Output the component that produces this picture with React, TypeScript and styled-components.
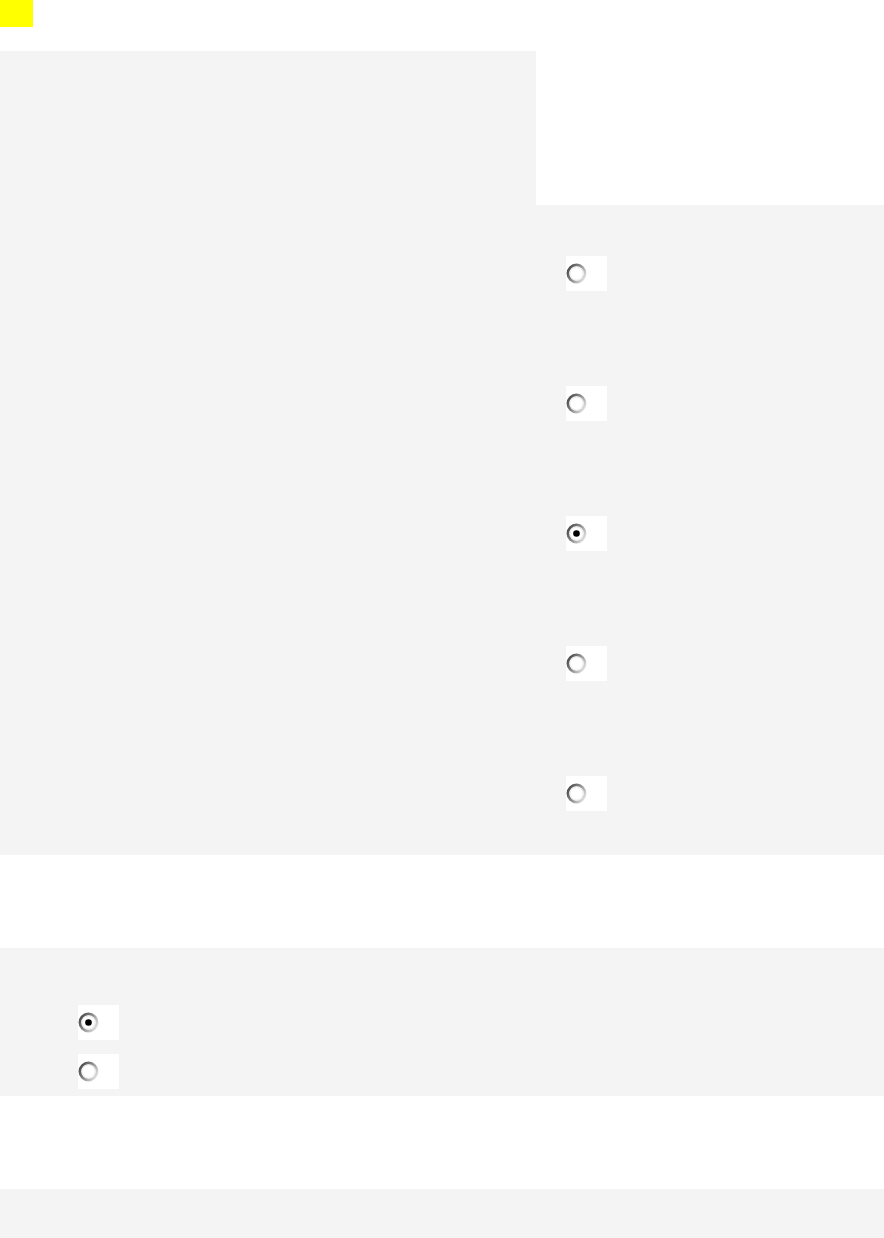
import React from "react";
import styled, { createGlobalStyle } from "styled-components";

const GlobalStyle = createGlobalStyle`
  html, body {
    margin: 0;
    padding: 0;
    background: #ffffff;
    font-family: "Liberation Sans", Arial, sans-serif;
  }
`;

const Page = styled.div`
  display: flex;
  flex-direction: column;
  width: 884px;
`;

const Marker = styled.div`
  width: 33px;
  height: 27px;
  background: #ffff00;
  margin-bottom: 24px;
`;

const Band = styled.section<{ $shade?: boolean; $height: number }>`
  background: ${(p) => (p.$shade ? "#f4f4f4" : "#ffffff")};
  height: ${(p) => p.$height}px;
  flex-shrink: 0;
`;

const Split = styled(Band)`
  display: grid;
  grid-template-columns: 536px 1fr;
`;

const SideColumn = styled.div`
  display: flex;
  flex-direction: column;
`;

const SideHeader = styled.div`
  height: 154px;
  background: #ffffff;
`;

const OptionList = styled.div<{ $gap: number; $top: number; $left: number }>`
  display: flex;
  flex-direction: column;
  gap: ${(p) => p.$gap}px;
  padding-top: ${(p) => p.$top}px;
  padding-left: ${(p) => p.$left}px;
`;

const RadioBox = styled.div`
  width: 41px;
  height: 35px;
  background: #ffffff;
  display: flex;
  align-items: center;
  padding-top: 1px;
  box-sizing: border-box;
`;

const Radio = ({ checked }: { checked?: boolean }) => (
  <RadioBox>
    <svg width="22" height="22" viewBox="0 0 22 22">
      <defs>
        <linearGradient id="ring" x1="0" y1="0.2" x2="1" y2="0.8">
          <stop offset="0" stopColor="#4a4a4a" />
          <stop offset="0.45" stopColor="#8a8a8a" />
          <stop offset="1" stopColor="#e4e4e4" />
        </linearGradient>
      </defs>
      <circle cx="10.5" cy="10.5" r="8.6" fill="#ffffff" stroke="url(#ring)" strokeWidth="2.7" />
      <circle cx="10.5" cy="10.5" r="6.5" fill="none" stroke="#ececec" strokeWidth="1" />
      {checked && <circle cx="10.5" cy="10.5" r="3.3" fill="#000000" />}
    </svg>
  </RadioBox>
);

const App = (): JSX.Element => {
  const sideOptions = [false, false, true, false, false];
  return (
    <>
      <GlobalStyle />
      <Page>
        <Marker />
        <Split $shade $height={804}>
          <div />
          <SideColumn>
            <SideHeader />
            <OptionList $gap={95} $top={51} $left={30}>
              {sideOptions.map((c, i) => (
                <Radio key={i} checked={c} />
              ))}
            </OptionList>
          </SideColumn>
        </Split>
        <Band $height={93} />
        <Band $shade $height={148}>
          <OptionList $gap={14} $top={57} $left={78}>
            <Radio checked />
            <Radio />
          </OptionList>
        </Band>
        <Band $height={93} />
        <Band $shade $height={60} />
      </Page>
    </>
  );
};

export default App;
